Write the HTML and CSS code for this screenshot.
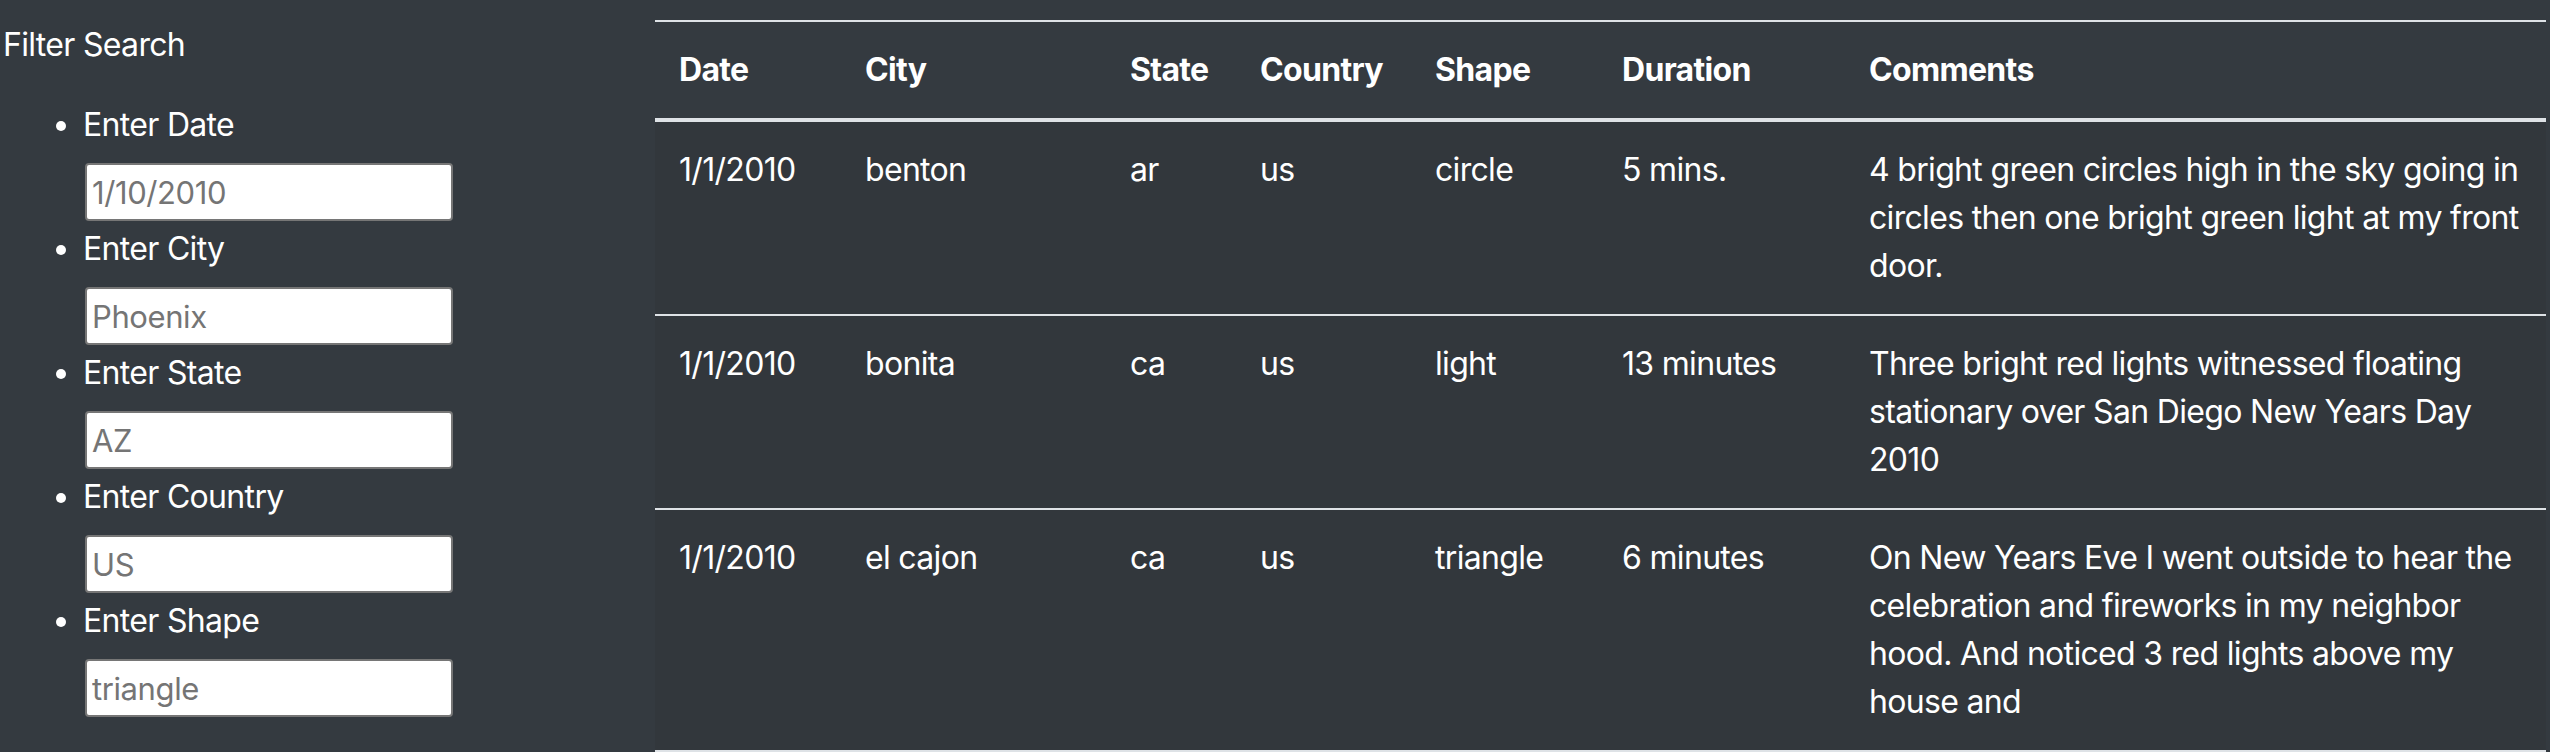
FILE: index.html
```html
<!DOCTYPE html>
<html lang="en">
<head>
<meta charset="utf-8">
<title>UFO Sightings</title>
<link rel="stylesheet" href="styles.css">
</head>
<body>
<div class="page">
  <aside class="sidebar">
    <div class="filter-title">Filter Search</div>
    <ul class="filters">
      <li class="filter">
        <label class="filter-label" for="datetime">Enter Date</label>
        <input class="filter-input" id="datetime" type="text" placeholder="1/10/2010">
      </li>
      <li class="filter">
        <label class="filter-label" for="city">Enter City</label>
        <input class="filter-input" id="city" type="text" placeholder="Phoenix">
      </li>
      <li class="filter">
        <label class="filter-label" for="state">Enter State</label>
        <input class="filter-input" id="state" type="text" placeholder="AZ">
      </li>
      <li class="filter">
        <label class="filter-label" for="country">Enter Country</label>
        <input class="filter-input" id="country" type="text" placeholder="US">
      </li>
      <li class="filter">
        <label class="filter-label" for="shape">Enter Shape</label>
        <input class="filter-input" id="shape" type="text" placeholder="triangle">
      </li>
    </ul>
  </aside>
  <main class="results">
    <table class="ufo-table">
      <colgroup>
        <col class="col-date">
        <col class="col-city">
        <col class="col-state">
        <col class="col-country">
        <col class="col-shape">
        <col class="col-duration">
        <col class="col-comments">
      </colgroup>
      <thead>
        <tr>
          <th>Date</th>
          <th>City</th>
          <th>State</th>
          <th>Country</th>
          <th>Shape</th>
          <th>Duration</th>
          <th>Comments</th>
        </tr>
      </thead>
      <tbody>
        <tr>
          <td>1/1/2010</td>
          <td>benton</td>
          <td>ar</td>
          <td>us</td>
          <td>circle</td>
          <td>5 mins.</td>
          <td class="comment">4 bright green circles high in the sky going in circles then one bright green light at my front door.</td>
        </tr>
        <tr>
          <td>1/1/2010</td>
          <td>bonita</td>
          <td>ca</td>
          <td>us</td>
          <td>light</td>
          <td>13 minutes</td>
          <td class="comment">Three bright red lights witnessed floating stationary over San Diego New Years Day 2010</td>
        </tr>
        <tr>
          <td>1/1/2010</td>
          <td>el cajon</td>
          <td>ca</td>
          <td>us</td>
          <td>triangle</td>
          <td>6 minutes</td>
          <td class="comment">On New Years Eve I went outside to hear the celebration and fireworks in my neighbor hood. And noticed 3 red lights above my house and</td>
        </tr>
      </tbody>
    </table>
  </main>
</div>
</body>
</html>
```
FILE: styles.css
```css
html, body {
  margin: 0;
  padding: 0;
  background: #343a40;
}

body {
  color: #ffffff;
  font-family: Inter, "Liberation Sans", sans-serif;
  font-size: 32px;
  line-height: 48px;
  letter-spacing: -0.68px;
  overflow: hidden;
}

.page {
  display: grid;
  grid-template-columns: 655px 1891px;
  align-items: start;
}

.sidebar {
  padding: 21px 0 0 3px;
}

.filter-title {
  font-size: 32px;
  line-height: 48px;
}

.filters {
  margin: 32px 0 0 0;
  padding: 0 0 0 80px;
  list-style: disc;
}

.filter {
  display: list-item;
}

.filter-label {
  display: block;
  margin-bottom: 14px;
}

.filter-input {
  display: block;
  box-sizing: border-box;
  width: 368px;
  height: 58px;
  margin: 0 0 4px 2px;
  padding: 0 5px;
  border: 2px solid #767676;
  border-radius: 4px;
  background: #ffffff;
  font-family: Inter, "Liberation Sans", sans-serif;
  font-size: 31px;
  letter-spacing: -0.4px;
  color: #222;
}

.filter-input::placeholder {
  color: #757575;
}

.results {
  padding-top: 20px;
}

.ufo-table {
  width: 1891px;
  table-layout: fixed;
  border-collapse: separate;
  border-spacing: 0;
}

.col-date { width: 186px; }
.col-city { width: 265px; }
.col-state { width: 130px; }
.col-country { width: 175px; }
.col-shape { width: 187px; }
.col-duration { width: 247px; }
.col-comments { width: 701px; }

.ufo-table th {
  padding: 24px;
  text-align: left;
  vertical-align: bottom;
  font-weight: 700;
  border-top: 2px solid #dee2e6;
  border-bottom: 4px solid #dee2e6;
}

.ufo-table tbody {
  background: #32373c;
}

.ufo-table td {
  padding: 24px;
  vertical-align: top;
  border-bottom: 2px solid #dee2e6;
}

.ufo-table td.comment {
  padding-right: 18px;
}
```
